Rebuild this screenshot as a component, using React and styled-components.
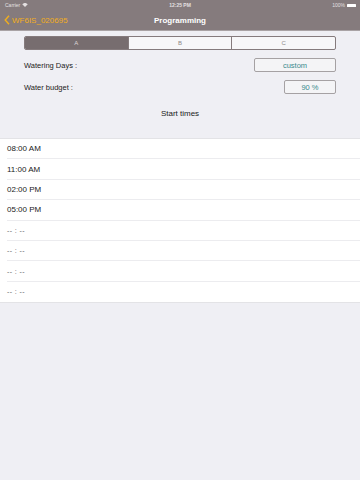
import React, { useState } from "react";
import styled, { createGlobalStyle } from "styled-components";

const Global = createGlobalStyle`
  html, body {
    margin: 0;
    padding: 0;
    background: #efeff4;
    font-family: "Liberation Sans", Arial, sans-serif;
  }
`;

const Screen = styled.div`
  width: 360px;
  height: 480px;
  background: #efeff4;
  display: flex;
  flex-direction: column;
  overflow: hidden;
`;

const Header = styled.div`
  background: #857b7d;
  height: 30px;
  display: flex;
  flex-direction: column;
  border-bottom: 1px solid #a9a3a5;
`;

const StatusBar = styled.div`
  height: 10px;
  display: flex;
  align-items: center;
  justify-content: space-between;
  padding: 0 4px 0 5px;
  font-size: 5px;
  color: #e4e0e1;
  position: relative;
`;

const StatusLeft = styled.div`
  display: flex;
  align-items: center;
  gap: 2px;
`;

const StatusTime = styled.div`
  position: absolute;
  left: 0;
  right: 0;
  text-align: center;
  font-weight: 700;
`;

const Battery = styled.div`
  display: flex;
  align-items: center;
  gap: 2px;
  & > span {
    display: block;
    width: 9px;
    height: 3px;
    background: #fff;
    border-radius: 0.5px;
  }
`;

const NavBar = styled.div`
  flex: 1;
  display: flex;
  align-items: center;
  position: relative;
  padding-left: 4px;
`;

const Back = styled.div`
  display: flex;
  align-items: center;
  gap: 2px;
  color: #f2ae1c;
  font-size: 8px;
  z-index: 1;
`;

const Title = styled.div`
  position: absolute;
  left: 0;
  right: 0;
  text-align: center;
  color: #fff;
  font-size: 8px;
  font-weight: 700;
`;

const Form = styled.div`
  padding: 5px 24px 0 24px;
  display: flex;
  flex-direction: column;
`;

const Segmented = styled.div`
  display: flex;
  height: 14px;
  border: 1px solid #857b7d;
  border-radius: 2px;
  overflow: hidden;
  background: #f7f7f9;
  box-sizing: border-box;
`;

const Segment = styled.div`
  flex: 1;
  display: flex;
  align-items: center;
  justify-content: center;
  font-size: 6px;
  color: ${(p) => (p.$active ? "#dcd6d8" : "#8d8789")};
  background: ${(p) => (p.$active ? "#776d6f" : "transparent")};
  & + & {
    border-left: 1px solid #857b7d;
  }
`;

const Row = styled.div`
  display: flex;
  align-items: center;
  justify-content: space-between;
  height: 14px;
  margin-top: ${(p) => p.$top}px;
`;

const Label = styled.div`
  font-size: 7.5px;
  color: #222;
`;

const ValueBox = styled.div`
  width: ${(p) => p.$w}px;
  height: 14px;
  box-sizing: border-box;
  border: 1px solid #a5a1a3;
  border-radius: 2px;
  background: #f4f4f6;
  color: #3a8a8d;
  font-size: 7.5px;
  display: flex;
  align-items: center;
  justify-content: center;
`;

const Section = styled.div`
  text-align: center;
  font-size: 8px;
  color: #1a1a1a;
  margin-top: 15px;
  height: 12px;
`;

const Table = styled.div`
  margin-top: 17px;
  background: #fff;
  border-top: 1px solid #e3e3e6;
  border-bottom: 1px solid #e3e3e6;
`;

const Cell = styled.div`
  height: 20.4px;
  margin-left: 7px;
  display: flex;
  align-items: center;
  font-size: 8px;
  color: #1a1a1a;
  box-sizing: border-box;
  border-bottom: ${(p) => (p.$last ? "none" : "1px solid #ececef")};
`;

const Empty = styled.span`
  color: #666;
  font-size: 7px;
  letter-spacing: 0.4px;
`;

const times = ["08:00 AM", "11:00 AM", "02:00 PM", "05:00 PM", null, null, null, null];

const App = () => {
  const [tab, setTab] = useState("A");

  return (
    <Screen>
      <Global />
      <Header>
        <StatusBar>
          <StatusLeft>
            Carrier
            <svg width="6" height="4" viewBox="0 0 12 8">
              <path d="M6 8 L0.5 2.5 A8 8 0 0 1 11.5 2.5 Z" fill="#e4e0e1" />
            </svg>
          </StatusLeft>
          <StatusTime>12:25 PM</StatusTime>
          <Battery>
            100%
            <span />
          </Battery>
        </StatusBar>
        <NavBar>
          <Back>
            <svg width="6" height="10" viewBox="0 0 6 10">
              <path d="M5 0.8 L1.2 5 L5 9.2" stroke="#f2ae1c" strokeWidth="1.4" fill="none" />
            </svg>
            WF6IS_020695
          </Back>
          <Title>Programming</Title>
        </NavBar>
      </Header>

      <Form>
        <Segmented>
          {["A", "B", "C"].map((t) => (
            <Segment key={t} $active={tab === t} onClick={() => setTab(t)}>
              {t}
            </Segment>
          ))}
        </Segmented>
        <Row $top={8}>
          <Label>Watering Days :</Label>
          <ValueBox $w={82}>custom</ValueBox>
        </Row>
        <Row $top={8}>
          <Label>Water budget :</Label>
          <ValueBox $w={52}>90 %</ValueBox>
        </Row>
        <Section>Start times</Section>
      </Form>

      <Table>
        {times.map((t, i) => (
          <Cell key={i} $last={i === times.length - 1}>
            {t ? t : <Empty>-- : --</Empty>}
          </Cell>
        ))}
      </Table>
    </Screen>
  );
};

export default App;
